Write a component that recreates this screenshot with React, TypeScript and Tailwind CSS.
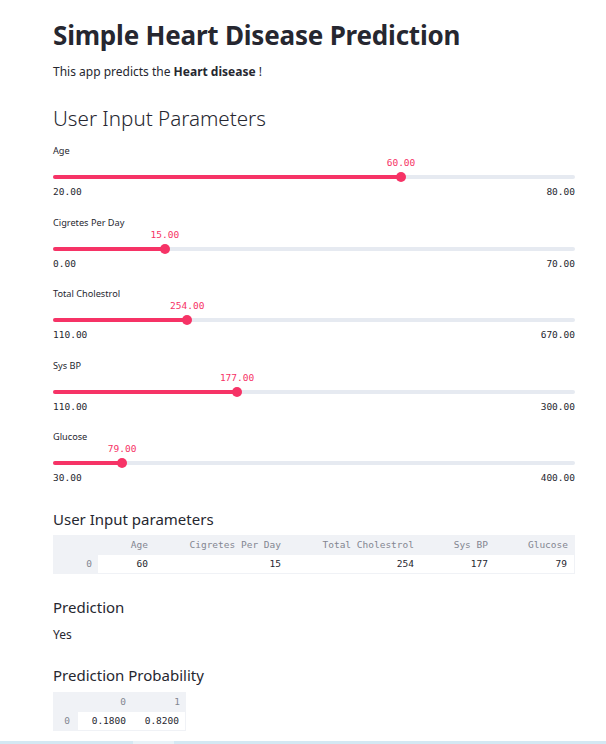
import React from "react";

type S = { label: string; min: number; max: number; value: number };
const sliders: S[] = [
  { label: "Age", min: 20, max: 80, value: 60 },
  { label: "Cigretes Per Day", min: 0, max: 70, value: 15 },
  { label: "Total Cholestrol", min: 110, max: 670, value: 254 },
  { label: "Sys BP", min: 110, max: 300, value: 177 },
  { label: "Glucose", min: 30, max: 400, value: 79 },
];

const mono = { fontFamily: '"DejaVu Sans Mono", monospace' };

function Slider({ s }: { s: S }) {
  const pct = ((s.value - s.min) / (s.max - s.min)) * 100;
  return (
    <div className="flex flex-col">
      <div className="text-[9.2px] leading-[12px] text-[#262730] h-[12px]">{s.label}</div>
      <div className="relative h-[40px]">
        <div
          className="absolute top-[0px] -translate-x-1/2 text-[9.5px] leading-[12px] text-[#f63366] font-['DejaVu_Sans_Mono',monospace]"
          style={{ left: `${pct}%` }}
        >
          {s.value.toFixed(2)}
        </div>
        <div className="absolute left-0 right-0 top-[18px] h-[4px] rounded-full bg-[#e6eaf1]" />
        <div className="absolute left-0 top-[18px] h-[4px] rounded-full bg-[#f63366]" style={{ width: `${pct}%` }} />
        <div
          className="absolute top-[15px] w-[10px] h-[10px] -translate-x-1/2 rounded-full bg-[#f63366]"
          style={{ left: `${pct}%` }}
        />
        <div className="absolute left-0 right-0 top-[29px] flex justify-between text-[9.5px] leading-[12px] text-[#262730] font-['DejaVu_Sans_Mono',monospace]">
          <span>{s.min.toFixed(2)}</span>
          <span>{s.max.toFixed(2)}</span>
        </div>
      </div>
    </div>
  );
}

export default function App() {
  return (
    <div className="relative w-[606px] h-[744px] bg-white overflow-hidden font-['Noto_Sans',sans-serif] text-[#262730]">
      <div className="pl-[53px] pr-[31px] pt-[18px] flex flex-col">
        <h1 className="text-[26px] leading-[34px] font-bold tracking-[-0.2px]">Simple Heart Disease Prediction</h1>
        <p className="mt-[12px] text-[12px] leading-[16px]">
          This app predicts the <b className="font-bold">Heart disease</b> !
        </p>
        <h2 className="mt-[24px] text-[20.6px] leading-[28px] font-light">User Input Parameters</h2>
        <div className="mt-[13px] flex flex-col gap-[19.5px]">
          {sliders.map((s) => (
            <Slider key={s.label} s={s} />
          ))}
        </div>
        <h3 className="mt-[26px] text-[15px] leading-[20px] font-normal">User Input parameters</h3>
        <div className="mt-[6px] flex flex-col text-[9.5px]" style={mono}>
          <div className="flex h-[20px] items-center bg-[#f0f2f6] text-[#838691]">
            <div className="w-[45px]" />
            <div className="w-[57px] text-right pr-[7px]">Age</div>
            <div className="w-[133px] text-right pr-[7px]">Cigretes Per Day</div>
            <div className="w-[133px] text-right pr-[7px]">Total Cholestrol</div>
            <div className="w-[74px] text-right pr-[7px]">Sys BP</div>
            <div className="w-[80px] text-right pr-[7px]">Glucose</div>
          </div>
          <div className="flex h-[18px] items-center bg-white">
            <div className="w-[45px] h-full flex items-center justify-end pr-[6px] bg-[#f0f2f6] text-[#838691]">0</div>
            <div className="w-[57px] text-right pr-[7px]">60</div>
            <div className="w-[133px] text-right pr-[7px]">15</div>
            <div className="w-[133px] text-right pr-[7px]">254</div>
            <div className="w-[74px] text-right pr-[7px]">177</div>
            <div className="w-[80px] text-right pr-[7px] border-r border-[#f0f2f6] h-full flex items-center justify-end">79</div>
          </div>
          <div className="h-px w-[522px] bg-[#f0f2f6]" />
        </div>
        <h3 className="mt-[23px] text-[15px] leading-[20px] font-normal">Prediction</h3>
        <p className="mt-[10px] text-[12px] leading-[16px]">Yes</p>
        <h3 className="mt-[22px] text-[15px] leading-[20px] font-normal">Prediction Probability</h3>
        <div className="mt-[7px] flex flex-col text-[9.5px] w-[133px]" style={mono}>
          <div className="flex h-[20px] items-center bg-[#f0f2f6] text-[#838691]">
            <div className="w-[25px]" />
            <div className="w-[54px] text-right pr-[6px]">0</div>
            <div className="w-[54px] text-right pr-[6px]">1</div>
          </div>
          <div className="flex h-[18px] items-center bg-white">
            <div className="w-[25px] h-full flex items-center justify-end pr-[8px] bg-[#f0f2f6] text-[#838691]">0</div>
            <div className="w-[54px] text-right pr-[6px]">0.1800</div>
            <div className="w-[54px] text-right pr-[6px] border-r border-[#f0f2f6] h-full flex items-center justify-end">0.8200</div>
          </div>
          <div className="h-px w-full bg-[#f0f2f6]" />
        </div>
      </div>
      <div className="absolute left-0 right-0 bottom-0 h-[3px] bg-[#d4e8f3] flex">
        <div className="ml-[133px] w-[41px] h-full bg-[#e8f2f8]" />
      </div>
    </div>
  );
}
